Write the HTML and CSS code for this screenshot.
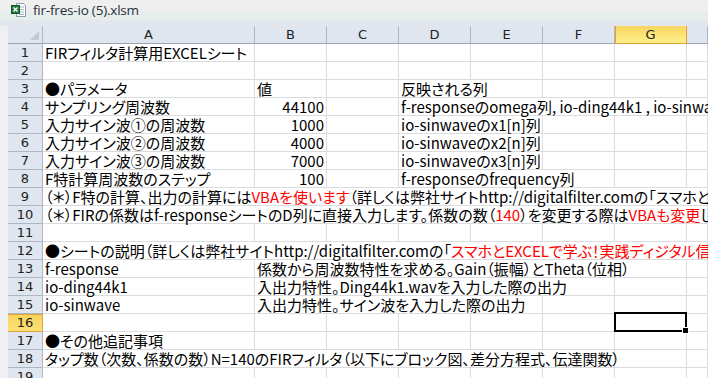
FILE: index.html
```html
<!DOCTYPE html>
<html lang="ja">
<head>
  <meta charset="UTF-8">
  <title>fir-fres-io (5).xlsm</title>
  <link rel="stylesheet" href="styles.css">
</head>
<body>
  <div class="titlebar">
    <svg class="xl-icon" width="16" height="16" viewBox="0 0 16 16">
      <path d="M5.5 1.5h7l2 2v11h-9z" fill="#fff" stroke="#8a9bb0"/>
      <path d="M8 5h5M8 7.5h5M8 10h5M8 12.5h5" stroke="#9fb8d0"/>
      <rect x="0.5" y="3.5" width="8" height="8" fill="#1f7a3a" stroke="#145a28"/>
      <path d="M2.5 5.5l4 4M6.5 5.5l-4 4" stroke="#fff" stroke-width="1.4"/>
    </svg>
    <span class="title">fir-fres-io (5).xlsm</span>
  </div>
  <div class="band"></div>

  <div class="sheet">
    <div class="gutter"></div>
    <div class="grid">
      <!-- column headers -->
      <div class="row head">
        <div class="corner"><span class="tri"></span></div>
        <div class="ch">A</div>
        <div class="ch">B</div>
        <div class="ch">C</div>
        <div class="ch">D</div>
        <div class="ch">E</div>
        <div class="ch">F</div>
        <div class="ch sel">G</div>
        <div class="ch"></div>
      </div>

      <div class="row">
        <div class="rh">1</div>
        <div class="c">FIRフィルタ計算用EXCELシート</div>
        <div class="c"></div><div class="c"></div><div class="c"></div><div class="c"></div><div class="c"></div><div class="c"></div><div class="c"></div>
      </div>
      <div class="row">
        <div class="rh">2</div>
        <div class="c"></div><div class="c"></div><div class="c"></div><div class="c"></div><div class="c"></div><div class="c"></div><div class="c"></div><div class="c"></div>
      </div>
      <div class="row">
        <div class="rh">3</div>
        <div class="c">●パラメータ</div>
        <div class="c">値</div>
        <div class="c"></div>
        <div class="c s2">反映される列</div>
        <div class="c"></div><div class="c"></div><div class="c"></div>
      </div>
      <div class="row">
        <div class="rh">4</div>
        <div class="c">サンプリング周波数</div>
        <div class="c num">44100</div>
        <div class="c"></div>
        <div class="c s5">f-responseのomega列, io-ding44k1 , io-sinwaveのomega列</div>
      </div>
      <div class="row">
        <div class="rh">5</div>
        <div class="c">入力サイン波①の周波数</div>
        <div class="c num">1000</div>
        <div class="c"></div>
        <div class="c s2">io-sinwaveのx1[n]列</div>
        <div class="c"></div><div class="c"></div><div class="c"></div>
      </div>
      <div class="row">
        <div class="rh">6</div>
        <div class="c">入力サイン波②の周波数</div>
        <div class="c num">4000</div>
        <div class="c"></div>
        <div class="c s2">io-sinwaveのx2[n]列</div>
        <div class="c"></div><div class="c"></div><div class="c"></div>
      </div>
      <div class="row">
        <div class="rh">7</div>
        <div class="c">入力サイン波③の周波数</div>
        <div class="c num">7000</div>
        <div class="c"></div>
        <div class="c s2">io-sinwaveのx3[n]列</div>
        <div class="c"></div><div class="c"></div><div class="c"></div>
      </div>
      <div class="row">
        <div class="rh">8</div>
        <div class="c">F特計算周波数のステップ</div>
        <div class="c num">100</div>
        <div class="c"></div>
        <div class="c s3">f-responseのfrequency列</div>
        <div class="c"></div><div class="c"></div>
      </div>
      <div class="row">
        <div class="rh">9</div>
        <div class="c s8">（＊）F特の計算、出力の計算には<span class="red">VBAを使います</span>（詳しくは弊社サイトhttp://digitalfilter.comの「スマホとEXCELで学ぶ！実践ディジタル信号処理」を参照）</div>
      </div>
      <div class="row">
        <div class="rh">10</div>
        <div class="c s8">（＊）FIRの係数はf-responseシートのD列に直接入力します。係数の数（<span class="red">140</span>）を変更する際は<span class="red">VBAも変更</span>してください。</div>
      </div>
      <div class="row">
        <div class="rh">11</div>
        <div class="c"></div><div class="c"></div><div class="c"></div><div class="c"></div><div class="c"></div><div class="c"></div><div class="c"></div><div class="c"></div>
      </div>
      <div class="row">
        <div class="rh">12</div>
        <div class="c s8">●シートの説明（詳しくは弊社サイトhttp://digitalfilter.comの「<span class="red">スマホとEXCELで学ぶ！実践ディジタル信号処理</span>」を参照）</div>
      </div>
      <div class="row">
        <div class="rh">13</div>
        <div class="c">f-response</div>
        <div class="c s6">係数から周波数特性を求める。Gain（振幅）とTheta（位相）</div>
        <div class="c"></div>
      </div>
      <div class="row">
        <div class="rh">14</div>
        <div class="c">io-ding44k1</div>
        <div class="c s5">入出力特性。Ding44k1.wavを入力した際の出力</div>
        <div class="c"></div><div class="c"></div>
      </div>
      <div class="row">
        <div class="rh">15</div>
        <div class="c">io-sinwave</div>
        <div class="c s4">入出力特性。サイン波を入力した際の出力</div>
        <div class="c"></div><div class="c"></div><div class="c"></div>
      </div>
      <div class="row">
        <div class="rh sel">16</div>
        <div class="c"></div><div class="c"></div><div class="c"></div><div class="c"></div><div class="c"></div><div class="c"></div>
        <div class="c active"><span class="frame"></span><span class="handle"></span></div>
        <div class="c"></div>
      </div>
      <div class="row">
        <div class="rh">17</div>
        <div class="c">●その他追記事項</div>
        <div class="c"></div><div class="c"></div><div class="c"></div><div class="c"></div><div class="c"></div><div class="c"></div><div class="c"></div>
      </div>
      <div class="row">
        <div class="rh">18</div>
        <div class="c s6">タップ数（次数、係数の数）N=140のFIRフィルタ（以下にブロック図、差分方程式、伝達関数）</div>
        <div class="c"></div><div class="c"></div>
      </div>
      <div class="row">
        <div class="rh">19</div>
        <div class="c"></div><div class="c"></div><div class="c"></div><div class="c"></div><div class="c"></div><div class="c"></div><div class="c"></div><div class="c"></div>
      </div>
    </div>
  </div>
</body>
</html>
```

FILE: styles.css
```css
/* Excel 2010 style sheet view */
body {
  margin: 0;
  width: 708px;
  height: 378px;
  overflow: hidden;
  background: #fff;
  font-family: "Noto Sans CJK JP", sans-serif;
}

.titlebar {
  height: 20px;
  display: flex;
  align-items: center;
  gap: 6px;
  padding-left: 11px;
  background: linear-gradient(#efefef 0, #efefef 55%, #e6eeec 56%, #e6eeec 100%);
}

.xl-icon {
  display: block;
}

.title {
  font-family: "Open Sans", sans-serif;
  font-size: 13.5px;
  line-height: 16px;
  color: #2a2f3a;
  letter-spacing: -0.2px;
}

.band {
  height: 6px;
  background: #e4e6ee;
}

.sheet {
  display: flex;
}

.gutter {
  width: 8px;
  background: #eef0f2;
  flex: none;
}

.grid {
  flex: 1;
  overflow: hidden;
}

.row {
  display: grid;
  grid-template-columns: 35px 212px repeat(6, 72px) 1fr;
  height: 18px;
}

.c,
.rh,
.ch,
.corner {
  box-sizing: border-box;
  height: 18px;
  border-right: 1px solid #dadcdd;
  border-bottom: 1px solid #dadcdd;
  white-space: nowrap;
}

.c {
  font-size: 15px;
  line-height: 17px;
  padding-left: 2px;
  color: #000;
  font-feature-settings: "palt";
}

.c.num {
  text-align: right;
  padding-right: 2px;
}

.s2 { grid-column: span 2; }
.s3 { grid-column: span 3; }
.s4 { grid-column: span 4; }
.s5 { grid-column: span 5; }
.s6 { grid-column: span 6; }
.s8 { grid-column: span 8; }

.red {
  color: #ff0000;
}

/* headers */
.ch,
.rh,
.corner {
  background: #dfe6ef;
  border-right: 1px solid #aeb6c2;
  border-bottom: 1px solid #aeb6c2;
  font-family: "DejaVu Sans", sans-serif;
  font-size: 13px;
  line-height: 17px;
  text-align: center;
  color: #222;
}

.head .ch,
.head .corner {
  border-bottom-color: #9da5b0;
}

.ch.sel {
  background: linear-gradient(#f8d660, #fff08c);
  border-right-color: #e0a23a;
  border-bottom-color: #e0a23a;
  box-shadow: inset 1px 0 0 #e0a23a;
}

.rh.sel {
  background: linear-gradient(#f8d35a, #fbe177);
  border-right-color: #e0a23a;
  border-bottom-color: #e0a23a;
  box-shadow: inset 0 1px 0 #e0a23a;
}

.corner {
  position: relative;
}

.tri {
  position: absolute;
  right: 3px;
  bottom: 3px;
  width: 0;
  height: 0;
  border-left: 9px solid transparent;
  border-bottom: 9px solid #c3c9d2;
}

/* active cell */
.c.active {
  position: relative;
}

.frame {
  position: absolute;
  left: -1px;
  top: -2px;
  width: 73px;
  height: 20px;
  box-sizing: border-box;
  border: 2px solid #000;
}

.handle {
  position: absolute;
  right: -3px;
  bottom: -3px;
  width: 5px;
  height: 5px;
  background: #000;
  border: 1px solid #fff;
}
```
